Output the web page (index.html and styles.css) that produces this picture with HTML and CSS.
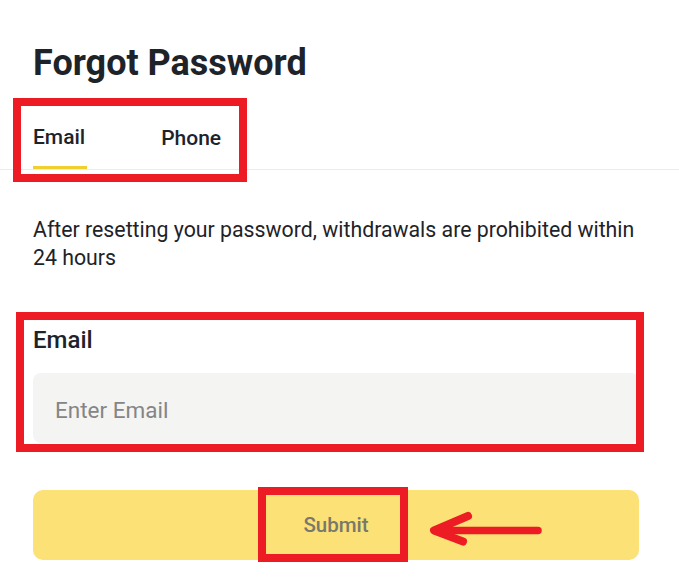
FILE: index.html
```html
<!DOCTYPE html>
<html lang="en">
<head>
<meta charset="utf-8">
<title>Forgot Password</title>
<link rel="stylesheet" href="styles.css">
</head>
<body>
<div class="page">
  <h1 class="title">Forgot Password</h1>
  <div class="tabs">
    <div class="tab tab-active">Email</div>
    <div class="tab tab-phone">Phone</div>
  </div>
  <div class="content">
    <p class="notice">After resetting your password, withdrawals are prohibited within 24 hours</p>
    <label class="field-label" for="email">Email</label>
    <input class="field-input" id="email" type="text" placeholder="Enter Email">
    <button class="submit" type="button">Submit</button>
  </div>

  <div class="mark mark-tabs"></div>
  <div class="mark mark-field"></div>
  <div class="mark mark-submit"></div>
  <svg class="arrow" viewBox="420 505 130 45" width="130" height="45" aria-hidden="true">
    <polyline points="468,516 434,530.5 463,541.5" fill="none" stroke="#ED1C24" stroke-width="8" stroke-linecap="round" stroke-linejoin="round"/>
    <line x1="436" y1="530.5" x2="538" y2="530.5" stroke="#ED1C24" stroke-width="7.5" stroke-linecap="round"/>
  </svg>
</div>
</body>
</html>
```
FILE: styles.css
```css
* {
  box-sizing: border-box;
}

html, body {
  margin: 0;
  padding: 0;
  background: #ffffff;
}

body {
  font-family: Roboto, "Liberation Sans", Arial, sans-serif;
  color: #1e2329;
}

.page {
  position: relative;
  width: 679px;
  height: 582px;
  padding-top: 43px;
  overflow: hidden;
}

.title {
  margin: 0 0 0 33px;
  font-size: 36px;
  line-height: 40px;
  font-weight: 700;
  color: #1e2329;
}

.tabs {
  display: flex;
  align-items: flex-start;
  gap: 74px;
  margin-top: 42px;
  padding-left: 33px;
  border-bottom: 1px solid #eaecef;
}

.tab {
  font-size: 21px;
  line-height: 24px;
  font-weight: 500;
  padding-bottom: 17px;
  border-bottom: 3px solid transparent;
  color: #1e2329;
}

.tab-active {
  border-bottom-color: #f0cf2f;
  padding-right: 2px;
}

.tab-phone {
  font-weight: 500;
  padding-top: 1px;
  padding-bottom: 16px;
}

.content {
  display: flex;
  flex-direction: column;
  width: 606px;
  margin-left: 33px;
}

.notice {
  margin: 46px 0 0 0;
  font-size: 21.3px;
  line-height: 28px;
  font-weight: 400;
  color: #1e2329;
}

.field-label {
  margin-top: 54px;
  font-size: 24px;
  line-height: 28px;
  font-weight: 500;
  color: #1e2329;
}

.field-input {
  margin-top: 19px;
  height: 70px;
  width: 100%;
  border: none;
  outline: none;
  border-radius: 8px;
  background: #f4f4f3;
  padding: 3px 22px 0 22px;
  font-family: Roboto, "Liberation Sans", Arial, sans-serif;
  font-size: 22.5px;
  color: #1e2329;
}

.field-input::placeholder {
  color: #858585;
}

.submit {
  margin-top: 47px;
  height: 70px;
  width: 100%;
  border: none;
  border-radius: 10px;
  background: #fce176;
  font-family: Roboto, "Liberation Sans", Arial, sans-serif;
  font-size: 20.5px;
  font-weight: 500;
  color: #7a786a;
  padding: 0;
}

.mark {
  position: absolute;
  border: 8px solid #ed1c24;
  pointer-events: none;
}

.mark-tabs {
  left: 13px;
  top: 98px;
  width: 234px;
  height: 84px;
}

.mark-field {
  left: 16px;
  top: 312px;
  width: 628px;
  height: 140px;
}

.mark-submit {
  left: 258px;
  top: 487px;
  width: 150px;
  height: 75px;
}

.arrow {
  position: absolute;
  left: 420px;
  top: 505px;
  pointer-events: none;
}
```
